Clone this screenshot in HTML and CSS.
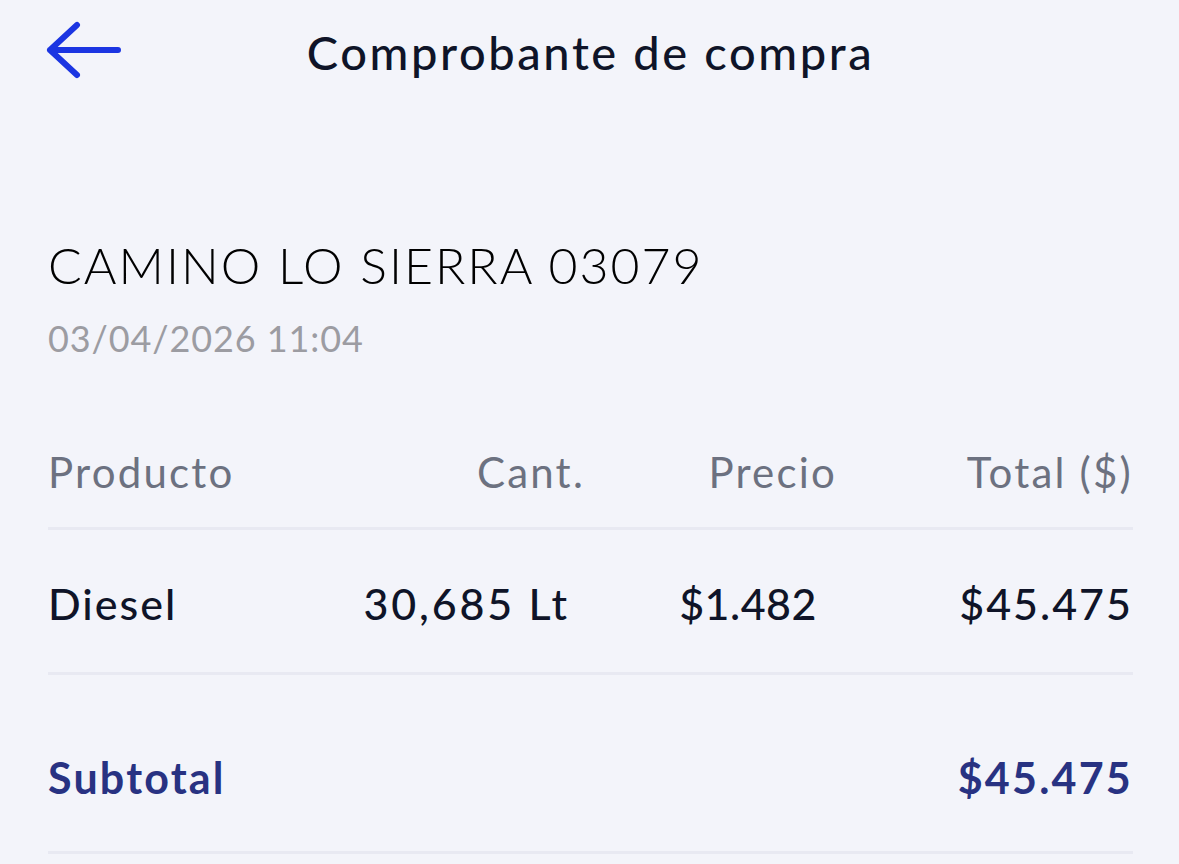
FILE: index.html
```html
<!DOCTYPE html>
<html lang="es">
<head>
<meta charset="utf-8">
<title>Comprobante de compra</title>
<link rel="stylesheet" href="styles.css">
</head>
<body>
<div class="screen">
  <header class="topbar">
    <button class="back" aria-label="Volver">
      <svg width="80" height="60" viewBox="0 0 80 60">
        <path d="M33 6 L6 31 L33 56 M6 31 L74 31" fill="none" stroke="#1b35e2" stroke-width="6" stroke-linecap="round" stroke-linejoin="round"/>
      </svg>
    </button>
    <h1 class="title">Comprobante de compra</h1>
  </header>

  <section class="station">
    <div class="station-name">CAMINO LO SIERRA 03079</div>
    <div class="station-date">03/04/2026 11:04</div>
  </section>

  <section class="table">
    <div class="row head">
      <div class="c1">Producto</div>
      <div class="c2">Cant.</div>
      <div class="c3">Precio</div>
      <div class="c4">Total ($)</div>
    </div>
    <div class="row item">
      <div class="c1">Diesel</div>
      <div class="c2">30,685 Lt</div>
      <div class="c3">$1.482</div>
      <div class="c4">$45.475</div>
    </div>
    <div class="row subtotal">
      <div class="label">Subtotal</div>
      <div class="value">$45.475</div>
    </div>
  </section>
</div>
</body>
</html>
```

FILE: styles.css
```css
html, body {
  margin: 0;
  padding: 0;
  background: #f3f4fa;
}
body {
  font-family: "Lato", "Noto Sans", sans-serif;
  color: #0f1428;
  line-height: 1.2;
}
.screen {
  padding: 0 46px 0 48px;
}
.topbar {
  position: relative;
  height: 105px;
  box-sizing: border-box;
  padding-top: 24px;
  display: flex;
  align-items: flex-start;
  justify-content: center;
}
.back {
  position: absolute;
  left: -4px;
  top: 19px;
  border: 0;
  background: none;
  padding: 0;
  line-height: 0;
}
.title {
  margin: 0;
  font-size: 47px;
  line-height: 1.2;
  font-weight: 500;
  color: #0f1428;
  letter-spacing: 2.6px;
}
.station {
  padding-top: 130px;
}
.station-name {
  font-size: 50px;
  font-weight: 300;
  color: #000;
  letter-spacing: 2px;
}
.station-date {
  margin-top: 22px;
  font-size: 36px;
  font-weight: 400;
  color: #9c9ca2;
  letter-spacing: 0.9px;
}
.table {
  margin-top: 87px;
}
.row {
  display: grid;
  grid-template-columns: 300px 240px 250px 1fr;
  align-items: start;
  border-bottom: 3px solid #e8e9f2;
}
.row .c2, .row .c3, .row .c4 {
  text-align: right;
}
.head {
  padding-bottom: 29px;
  font-size: 42px;
  font-weight: 400;
  color: #6c7180;
  letter-spacing: 2.2px;
}
.head .c2 { padding-right: 3px; }
.head .c3 { padding-right: 1px; }
.head .c4 { padding-right: 0; }
.item {
  padding-top: 48px;
  padding-bottom: 43px;
  font-size: 43px;
  font-weight: 500;
  color: #0f1428;
  letter-spacing: 2px;
}
.item .c2 { padding-right: 18px; letter-spacing: 2.8px; }
.item .c3 { padding-right: 21px; letter-spacing: 0.5px; }
.item .c4 { padding-right: 0; }
.subtotal {
  display: flex;
  justify-content: space-between;
  padding-top: 77px;
  padding-bottom: 47px;
  font-size: 43px;
  font-weight: 700;
  color: #283282;
  letter-spacing: 2.2px;
}
.subtotal .value { padding-right: 0; }
```
